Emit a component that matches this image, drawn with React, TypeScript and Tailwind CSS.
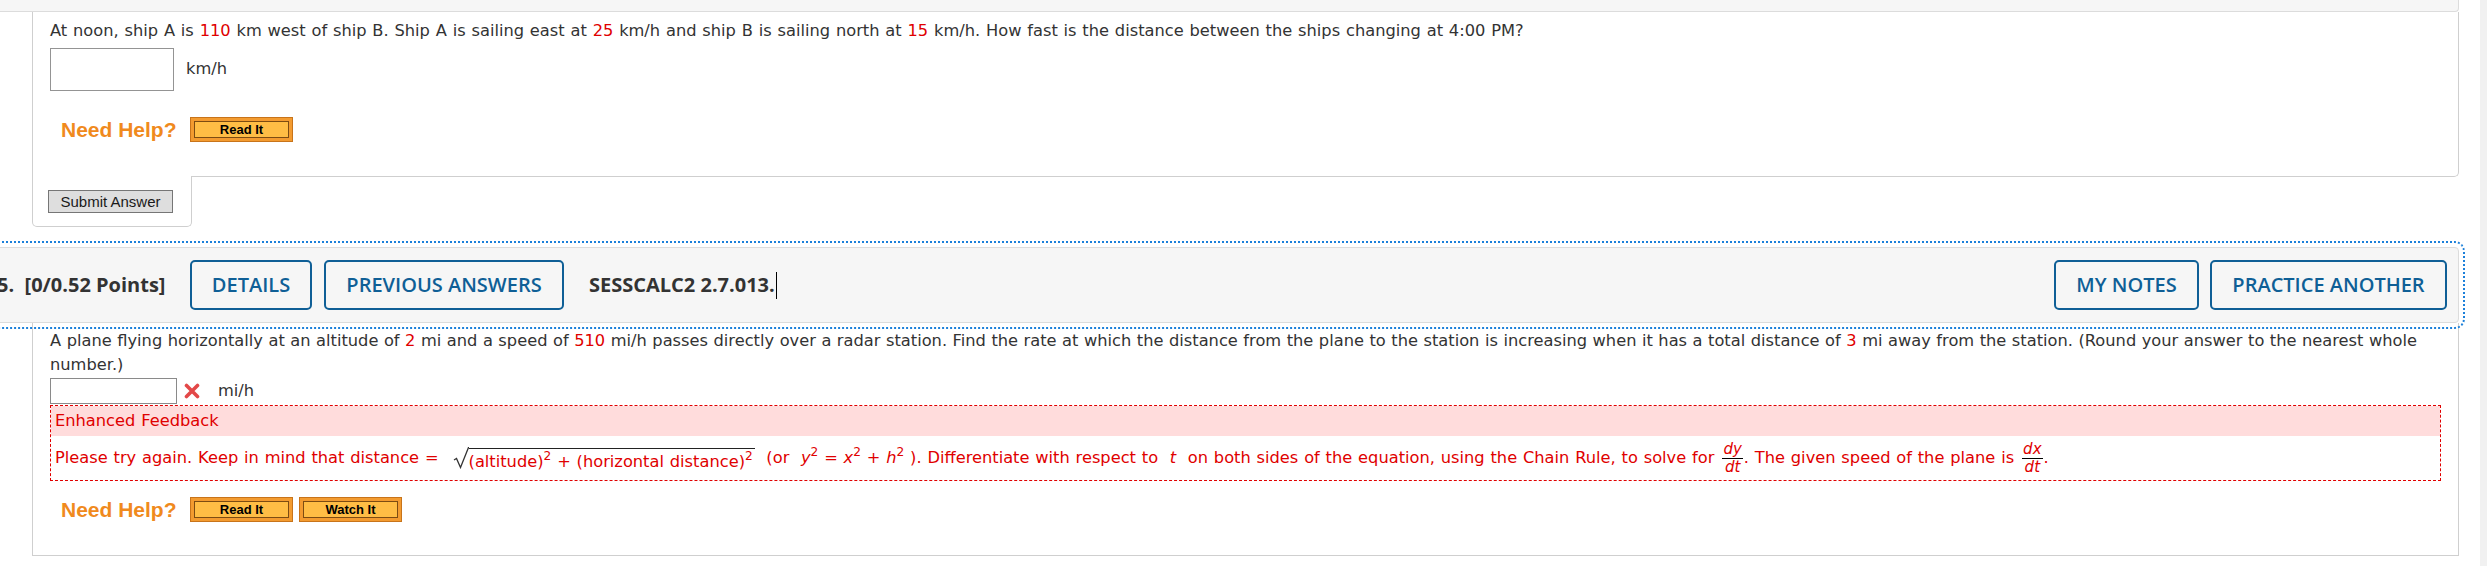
import React from 'react';

const R = ({ children }: { children: React.ReactNode }) => <span className="text-[#e00000]">{children}</span>;

const HelpButton = ({ label }: { label: string }) => (
  <button className="h-[25px] w-[103px] border border-[#c8741a] bg-[#f39b30] p-[3px]">
    <span className="flex h-full w-full items-center justify-center border border-[#7d4c12] bg-[#ffbd45] font-['Liberation_Sans',Arial,sans-serif] text-[13px] font-bold leading-none text-black">
      {label}
    </span>
  </button>
);

const NeedHelp = ({ children }: { children: React.ReactNode }) => (
  <div className="ml-[11px] flex h-[25px] items-center gap-[6px] [word-spacing:0]">
    <span className="w-[123px] font-['Liberation_Sans',Arial,sans-serif] text-[21px] font-bold leading-none text-[#f08a1d]">
      Need Help?
    </span>
    {children}
  </div>
);

const HeaderButton = ({ label, w }: { label: string; w: string }) => (
  <button
    className={`flex h-[50px] items-center justify-center rounded-[5px] border-2 border-[#0f5f96] font-['Open_Sans',sans-serif] text-[20px] font-semibold text-[#0f5f96] ${w}`}
  >
    {label}
  </button>
);

const Frac = ({ top, bottom }: { top: string; bottom: string }) => (
  <span className="mr-px ml-[8px] inline-flex flex-col items-center align-middle text-[15px] italic leading-[17px]">
    <span className="border-b border-black px-px">{top}</span>
    <span>{bottom}</span>
  </span>
);

export default function App() {
  return (
    <div className="flex h-[566px] w-[2487px] overflow-hidden bg-white font-['DejaVu_Sans',Verdana,sans-serif] text-[16.25px] text-[#333] [word-spacing:0.65px]">
      <div className="w-[2459px] shrink-0">
        {/* end of the previous question's header */}
        <div className="-ml-[10px] h-[12px] rounded-br-[4px] border-r border-b border-[#dcdcdc] bg-[#f6f6f6]" />

        <div className="ml-[32px] rounded-br-[5px] border-x border-b border-[#cfcfcf] px-[17px] pt-[7px] pb-[34px]">
          <p className="leading-[24px]">
            At noon, ship A is <R>110</R> km west of ship B. Ship A is sailing east at <R>25</R> km/h and ship B is
            sailing north at <R>15</R> km/h. How fast is the distance between the ships changing at 4:00 PM?
          </p>
          <div className="mt-[5px] flex h-[43px] items-center">
            <input className="h-[43px] w-[124px] border border-[#949494] bg-white" />
            <span className="ml-[12px]">km/h</span>
          </div>
          <div className="mt-[26px]">
            <NeedHelp>
              <HelpButton label="Read It" />
            </NeedHelp>
          </div>
        </div>
        <div className="-mt-px ml-[32px] h-[51px] w-[160px] rounded-b-[5px] border-x border-b border-[#cfcfcf] bg-white pt-[14px] pl-[15px]">
          <button className="flex h-[23px] w-[125px] items-center justify-center border border-[#767676] bg-[#dedede] font-['Liberation_Sans',Arial,sans-serif] text-[15px] leading-[19px] whitespace-nowrap text-[#1a1a1a] [word-spacing:0]">
            Submit Answer
          </button>
        </div>

        {/* question 5 header */}
        <div className="mt-[20px] -ml-[10px] flex h-[76px] items-center rounded-[4px] border border-[#dcdcdc] bg-[#f6f6f6] pr-[11px] font-['Open_Sans',sans-serif] outline-2 outline-offset-4 outline-[#1c80da] outline-dotted [word-spacing:0]">
          <div className="w-[199px] shrink-0 pl-[6px] text-[20px] font-bold whitespace-nowrap text-[#333]">
            5.&nbsp;&nbsp;[0/0.52 Points]
          </div>
          <HeaderButton label="DETAILS" w="w-[122px]" />
          <div className="ml-[12px]">
            <HeaderButton label="PREVIOUS ANSWERS" w="w-[240px]" />
          </div>
          <div className="ml-[25px] flex items-center text-[20px] font-bold text-[#333]">
            SESSCALC2 2.7.013.
            <span className="ml-px h-[27px] w-px bg-black" />
          </div>
          <div className="ml-auto">
            <HeaderButton label="MY NOTES" w="w-[145px]" />
          </div>
          <div className="ml-[11px]">
            <HeaderButton label="PRACTICE ANOTHER" w="w-[237px]" />
          </div>
        </div>

        <div className="ml-[32px] border-x border-b border-[#cfcfcf] px-[17px] pt-[6px] pb-[33px]">
          <p className="leading-[24px] whitespace-nowrap [word-spacing:0.35px]">
            A plane flying horizontally at an altitude of <R>2</R> mi and a speed of <R>510</R> mi/h passes directly over a
            radar station. Find the rate at which the distance from the plane to the station is increasing when it has a
            total distance of <R>3</R> mi away from the station. (Round your answer to the nearest whole
            <br />
            number.)
          </p>
          <div className="mt-px flex h-[26px] items-center">
            <input className="h-[26px] w-[127px] border border-[#8a8a8a] bg-white" />
            <svg className="ml-[7px]" width="16" height="16" viewBox="0 0 16 16">
              <path d="M2.5 2.5 L13.5 13.5 M13.5 2.5 L2.5 13.5" stroke="#e34848" strokeWidth="3.6" strokeLinecap="round" />
            </svg>
            <span className="ml-[18px]">mi/h</span>
          </div>

          <div className="mt-px border border-dashed border-[#e00000] text-[#e00000]">
            <div className="flex h-[30px] items-center bg-[#ffdcdc] pl-[4px]">Enhanced Feedback</div>
            <div className="flex h-[44px] items-center pl-[4px]">
              <p className="leading-[24px] whitespace-nowrap">
                Please try again. Keep in mind that distance =
                <svg className="ml-[14px] inline-block align-[-6px]" width="16" height="22" viewBox="0 0 16 22">
                  <path d="M1 13 L3.5 11.5 L7.5 20.5 L15.5 0.5 L16 0.5" fill="none" stroke="#333" strokeWidth="1.3" />
                </svg>
                <span className="inline-block border-t border-[#222] pt-[3px] pr-[2px] leading-[20px] align-[-4px]">
                  (altitude)<sup>2</sup> + (horizontal distance)<sup>2</sup>
                </span>
                &nbsp;&nbsp;(or&nbsp;&nbsp;<i>y</i>
                <sup>2</sup> = <i>x</i>
                <sup>2</sup> + <i>h</i>
                <sup>2</sup> ). Differentiate with respect to&nbsp; <i>t</i>&nbsp; on both sides of the equation, using the
                Chain Rule, to solve for
                <Frac top="dy" bottom="dt" />. The given speed of the plane is
                <Frac top="dx" bottom="dt" />.
              </p>
            </div>
          </div>

          <div className="mt-[16px]">
            <NeedHelp>
              <HelpButton label="Read It" />
              <HelpButton label="Watch It" />
            </NeedHelp>
          </div>
        </div>
      </div>
      <div className="ml-auto h-full w-[7px] bg-[#f1f1f1]" />
    </div>
  );
}
